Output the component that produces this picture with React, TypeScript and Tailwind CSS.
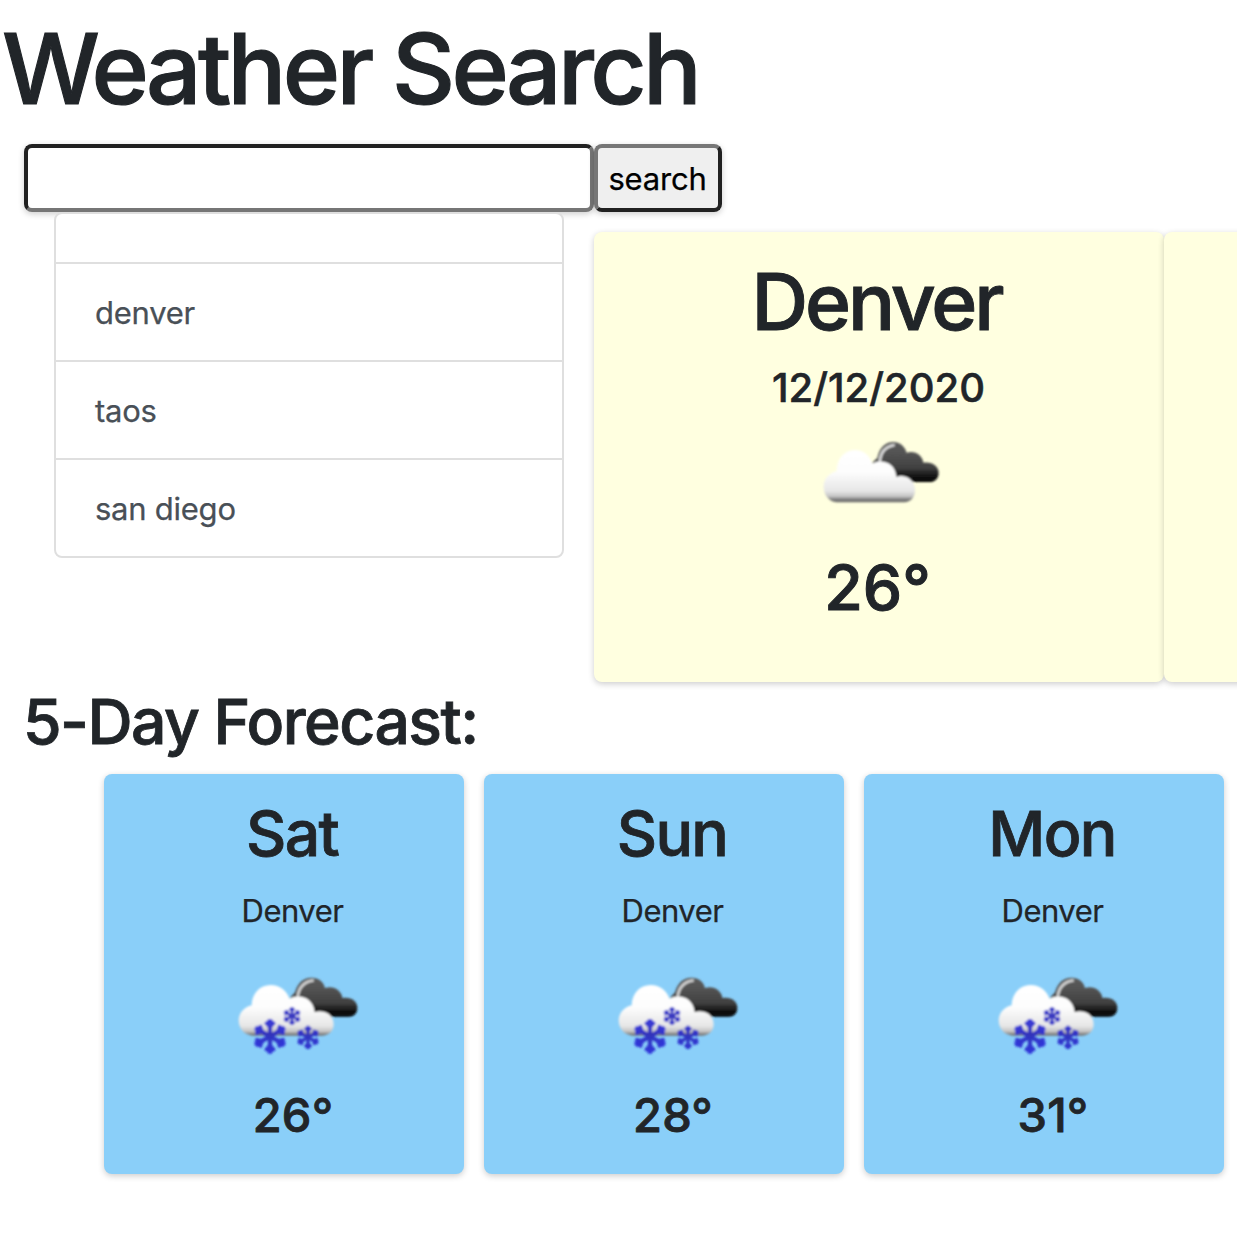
const CITIES = ["denver", "taos", "san diego"];
const DAYS = [
  { day: "Sat", temp: "26°" },
  { day: "Sun", temp: "28°" },
  { day: "Mon", temp: "31°" },
];

function CloudGradients({ id }: { id: string }) {
  return (
    <defs>
      <linearGradient id={`${id}-light`} gradientUnits="userSpaceOnUse" x1="0" y1="60" x2="0" y2="218">
        <stop offset="0" stopColor="#ffffff" />
        <stop offset="0.42" stopColor="#fdfdfd" />
        <stop offset="0.78" stopColor="#e6e6e6" />
        <stop offset="0.88" stopColor="#c4c4c4" />
        <stop offset="0.94" stopColor="#7c7c7c" />
        <stop offset="1" stopColor="#666666" />
      </linearGradient>
      <linearGradient id={`${id}-dark`} gradientUnits="userSpaceOnUse" x1="0" y1="38" x2="0" y2="155">
        <stop offset="0" stopColor="#5c5c5c" />
        <stop offset="0.35" stopColor="#505050" />
        <stop offset="0.65" stopColor="#404040" />
        <stop offset="0.85" stopColor="#141414" />
        <stop offset="1" stopColor="#000000" />
      </linearGradient>
      <filter id={`${id}-soft`} x="-10%" y="-10%" width="120%" height="120%">
        <feGaussianBlur stdDeviation="3" />
      </filter>
    </defs>
  );
}

function BrokenClouds() {
  return (
    <svg width="140" height="90" viewBox="0 0 420 270" className="block shrink-0">
      <CloudGradients id="broken" />
      <g filter="url(#broken-soft)">
        <path
          d="M186 98 L202 84 C208 54 225 36 250 36 C270 36 285 50 290 68 C314 60 338 76 340 98 C366 94 386 108 386 128 C386 146 374 156 358 156 H262 L210 110 Z"
          fill="url(#broken-dark)"
        />
        <path d="M209 98 C211 66 226 49 254 45" fill="none" stroke="#dcdcdc" strokeWidth="8" />
        <path
          d="M80 217 C56 215 40 193 41 168 C42 146 58 129 80 123 C80 88 102 61 133 60 C160 60 178 74 187 101 C215 86 256 98 259 140 C290 132 315 151 315 181 C315 202 302 217 283 217 Z"
          fill="url(#broken-light)"
        />
      </g>
    </svg>
  );
}

function Snowflake({ x, y, r, w }: { x: number; y: number; r: number; w: number }) {
  return (
    <g transform={`translate(${x} ${y})`} stroke="url(#flake)" strokeWidth={w}>
      {[0, 60, 120, 180, 240, 300].map((a) => (
        <g key={a} transform={`rotate(${a})`}>
          <path
            d={`M0.01 0 L0 ${-r} M${-r * 0.25} ${-r * 0.84} L0 ${-r * 0.55} L${r * 0.25} ${-r * 0.84}`}
            fill="none"
          />
        </g>
      ))}
    </g>
  );
}

function SnowClouds({ id }: { id: string }) {
  return (
    <svg width="145" height="100" viewBox="0 0 435 300" className="block shrink-0">
      <CloudGradients id={id} />
      <defs>
        <linearGradient id="flake" gradientUnits="userSpaceOnUse" x1="0" y1="-50" x2="0" y2="50">
          <stop offset="0" stopColor="#2a2ad8" />
          <stop offset="1" stopColor="#2a2a9c" />
        </linearGradient>
      </defs>
      <g filter={`url(#${id}-soft)`}>
        <path
          d="M195 98 L210 82 C218 54 234 38 260 38 C280 38 296 50 300 69 C324 60 350 76 352 99 C378 95 397 108 397 128 C397 146 386 155 370 155 H272 L218 110 Z"
          fill={`url(#${id}-dark)`}
        />
        <path d="M218 96 C221 68 234 50 266 46" fill="none" stroke="#d2d2d2" strokeWidth="8" />
        <path
          d="M82 212 C58 210 41 191 41 166 C42 143 58 126 80 121 C81 86 104 60 137 60 C165 60 184 76 194 101 C224 86 264 98 269 141 C300 133 326 150 326 178 C326 199 312 212 290 212 Z"
          fill={`url(#${id}-light)`}
        />
        <g opacity="0.92">
          <Snowflake x={135} y={214} r={52} w={13} />
          <Snowflake x={249} y={217} r={35} w={10} />
          <Snowflake x={201} y={153} r={27} w={8.5} />
        </g>
      </g>
    </svg>
  );
}

export default function App() {
  return (
    <div className="h-[1237px] w-full overflow-hidden bg-white font-['Inter',sans-serif] text-[#212529] [-webkit-text-stroke:0.25px_currentColor]">
      <h1 className="h-[144px] pl-[2px] text-[97.7px] font-medium leading-[137px] tracking-[-3.65px] whitespace-nowrap [-webkit-text-stroke:1.1px_currentColor] [word-spacing:-1px]">
        Weather Search
      </h1>

      <div className="flex pl-6">
        <input
          type="text"
          className="h-[68px] w-[570px] rounded-lg border-4 border-t-[#212121] border-r-[#767676] border-b-[#767676] border-l-[#212121] bg-white shadow-[0_2px_6px_rgba(0,0,0,0.2)] outline-none"
        />
        <button className="h-[68px] w-[128px] rounded-lg border-4 border-t-[#767676] border-r-[#212121] border-b-[#212121] border-l-[#767676] bg-[#efefef] pr-px text-[31px] leading-[61px] tracking-[-0.2px] text-black shadow-[0_2px_6px_rgba(0,0,0,0.2)]">
          search
        </button>
      </div>

      <div className="flex h-[470px] pl-[54px]">
        <ul className="relative h-[346px] w-[510px] shrink-0 rounded-lg border-2 border-[#dfdfdf] bg-white text-[31px] text-[#495057]">
          <li className="h-[50px] border-b-2 border-[#dfdfdf]" />
          {CITIES.map((city) => (
            <li
              key={city}
              className="h-[98px] border-b-2 border-[#dfdfdf] pl-[39px] leading-[97px] tracking-[-0.25px] last:h-[96px] last:border-b-0"
            >
              {city}
            </li>
          ))}
        </ul>

        <div className="ml-[30px] mt-5 flex h-[450px] shrink-0">
          <section className="flex w-[570px] flex-col items-center rounded-lg bg-[#ffffe0] pt-[29px] shadow-[0_2px_6px_rgba(0,0,0,0.2)]">
            <h2 className="h-[103px] pr-[5px] text-[78.5px] font-medium leading-[81px] tracking-[-3.1px] [-webkit-text-stroke:0.9px_currentColor]">
              Denver
            </h2>
            <p className="h-[66px] pr-px text-[40px] font-medium leading-[48px] [-webkit-text-stroke:0.5px_currentColor]">
              12/12/2020
            </p>
            <div className="ml-[2px] h-[122px]">
              <BrokenClouds />
            </div>
            <p className="pr-[3px] text-[62.5px] font-medium leading-[71px] [-webkit-text-stroke:1px_currentColor]">26°</p>
          </section>
          <section className="w-[570px] rounded-lg bg-[#ffffe0] shadow-[0_2px_6px_rgba(0,0,0,0.2)]" />
        </div>
      </div>

      <h2 className="h-[92px] pl-[23px] pt-[1px] text-[62.5px] font-medium leading-[77px] tracking-[-1.55px] [-webkit-text-stroke:0.8px_currentColor]">
        5-Day Forecast:
      </h2>

      <div className="flex gap-5 pl-[104px]">
        {DAYS.map(({ day, temp }) => (
          <section
            key={day}
            className="flex h-[400px] w-[360px] shrink-0 flex-col items-center rounded-lg bg-[#8acff9] pl-[18px] pt-5 shadow-[0_2px_6px_rgba(0,0,0,0.2)]"
          >
            <h3 className="h-[92px] pr-[2px] text-[62.5px] font-medium leading-[79px] tracking-[-1.7px] [-webkit-text-stroke:0.8px_currentColor]">
              {day}
            </h3>
            <p className="h-[79px] pr-px text-[31px] leading-[49px] tracking-[-0.5px]">Denver</p>
            <div className="ml-[9px] h-[126px]">
              <SnowClouds id={`snow-${day}`} />
            </div>
            <p className="text-[47px] font-medium leading-[48px] tracking-[0.2px] [-webkit-text-stroke:0.8px_currentColor]">
              {temp}
            </p>
          </section>
        ))}
      </div>
    </div>
  );
}
